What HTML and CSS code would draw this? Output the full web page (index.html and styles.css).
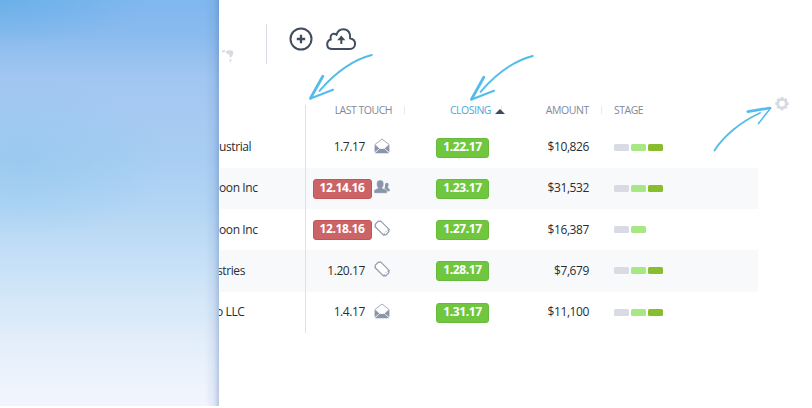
FILE: index.html
```html
<!DOCTYPE html>
<html lang="en">
<head>
<meta charset="utf-8">
<title>Deals</title>
<link rel="stylesheet" href="styles.css">
</head>
<body>
<svg class="defs" aria-hidden="true">
  <symbol id="mail" viewBox="0 0 16 16">
    <path d="M1 6.500 8 1l7 5.500-4.500 5h-5z" fill="#fff" stroke="#a2aabb" stroke-width="1"/>
    <path d="M.6 6.800 5.300 10.600.6 14.300zM15.400 6.800v7.500L10.700 10.600zM.8 15.300 6 10.600q2 1.500 4 0l5.200 4.700z" fill="#8a94ab"/>
  </symbol>
  <symbol id="people" viewBox="0 0 16 16">
    <path d="M10.500 13.200V8.800c1-.7.500-1.700.5-2.700 0-1.500.8-2.400 1.800-2.400 1.400 0 1.900 1.200 1.700 2.600-.1 1.100-.7 1.600-.7 2.400l1.900 1.500v1.800z" fill="#8a94ab"/>
    <path d="M0 14.300v-2.600c.3-1.500 2.600-1.700 3.800-2.400v-.8C2.600 7.200 2.500 5.700 2.700 3.900 3 1.900 4.200 1 6.200 1s3.200 1 3.500 2.900c.2 1.800-.1 3.300-1.300 4.600v.8c1.400.7 4.400.9 4.700 2.400v2.600z" fill="#8a94ab" stroke="#f8f9fb" stroke-width=".5"/>
  </symbol>
  <symbol id="ticket" viewBox="0 0 16 16">
    <path d="M6.600.9 15.300 9.600l-.8.900.5 1.200-3.300 3.300-1.200-.4-.9.600L.9 6.500l.7-.9L1.100 4.400 4.500 1l1.200.5z" fill="#fff" stroke="#929bb1" stroke-width="1.200" stroke-linejoin="round"/>
    <path d="m9.600 14 4.400-4.400" stroke="#929bb1" stroke-width=".9" stroke-dasharray="1.500 1"/>
  </symbol>
</svg>
<div class="page">
  <div class="sky"></div>
  <main class="panel">
    <div class="toolbar">
      <svg class="fragment" width="14" height="15" viewBox="0 0 14 15"><path d="M1 2.500 4 2" fill="none" stroke="#d8dbe1" stroke-width="1.800"/><path d="M4.500 2.500c3-1.500 6-1.500 7.700-.2.300 3-.5 5.500-3.400 6.400L8.300 5.500 5.800 4.600zM8 10.500h3l-1.800 3.200z" fill="#d8dbe1"/></svg>
      <span class="rule"></span>
      <svg class="add" width="24" height="24" viewBox="0 0 24 24" fill="none" stroke="#414d5c"><circle cx="12" cy="12" r="10.500" stroke-width="2"/><path d="M12 7.800v8.400M7.800 12h8.400" stroke-width="2.300"/></svg>
      <svg class="upload" width="31" height="23" viewBox="0 0 31 23" fill="none" stroke="#414d5c" stroke-width="2"><path d="M6.500 21C3 21 1.200 19 1.200 16.500c0-2.800 1.300-4.300 3.500-5C4 8.500 5 6 7.700 5.800c1.300-.1 2 .3 2.800.9C11.500 3.300 14 1.300 17.300 1.300c5 0 7.500 4 6.800 9 3.500.8 5 3 5 5.500 0 3-2.300 5.200-5.300 5.200z"/><path d="M15.300 16V10"/><path d="m11.200 12.200 4.100-4.700 4.100 4.700z" fill="#414d5c" stroke="none"/></svg>
    </div>
    <div class="table">
      <div class="row head">
        <span class="company"></span>
        <span class="touch"><span class="label last">LAST TOUCH</span></span>
        <span class="closing"><span class="label">CLOSING</span><i class="sort"></i></span>
        <span class="amount"><span class="label">AMOUNT</span></span>
        <span class="stage"><span class="label">STAGE</span></span>
      </div>
      <div class="row">
        <span class="company">ustrial</span>
        <span class="touch"><span class="date">1.7.17</span><svg><use href="#mail"/></svg></span>
        <span class="closing"><b class="badge">1.22.17</b></span>
        <span class="amount">$10,826</span>
        <span class="stage"><i></i><i></i><i></i></span>
      </div>
      <div class="row alt">
        <span class="company">oon Inc</span>
        <span class="touch"><b class="badge late">12.14.16</b><svg><use href="#people"/></svg></span>
        <span class="closing"><b class="badge">1.23.17</b></span>
        <span class="amount">$31,532</span>
        <span class="stage"><i></i><i></i><i></i></span>
      </div>
      <div class="row">
        <span class="company">oon Inc</span>
        <span class="touch"><b class="badge late">12.18.16</b><svg><use href="#ticket"/></svg></span>
        <span class="closing"><b class="badge">1.27.17</b></span>
        <span class="amount">$16,387</span>
        <span class="stage"><i></i><i></i></span>
      </div>
      <div class="row alt">
        <span class="company cut-s">stries</span>
        <span class="touch"><span class="date">1.20.17</span><svg><use href="#ticket"/></svg></span>
        <span class="closing"><b class="badge">1.28.17</b></span>
        <span class="amount">$7,679</span>
        <span class="stage"><i></i><i></i><i></i></span>
      </div>
      <div class="row">
        <span class="company cut-o">o LLC</span>
        <span class="touch"><span class="date">1.4.17</span><svg><use href="#mail"/></svg></span>
        <span class="closing"><b class="badge">1.31.17</b></span>
        <span class="amount">$11,100</span>
        <span class="stage"><i></i><i></i><i></i></span>
      </div>
    </div>
  </main>
  <svg class="notes" width="812" height="408" viewBox="0 0 812 408" fill="none">
    <g stroke="#54bcea" stroke-linecap="round" stroke-linejoin="round">
      <g id="arrow"><path d="M371.800 55C352 60 335 73 319.500 90.800" stroke-width="1.900"/><path d="M322.800 76.200 310.500 98.200" stroke-width="2.800"/><path d="M310.500 98.500 333 89.800" stroke-width="2.100"/></g>
      <use href="#arrow" x="161" y="1"/>
      <path d="M714.500 150.500C723 137 740 122 760 113" stroke-width="1.900"/>
      <path d="M747.800 111.600 770 108" stroke-width="2.700"/><path d="m770.300 108.500-11.800 15" stroke-width="1.600"/>
    </g>
    <g transform="translate(782 103.600)" stroke="#d7dae1"><circle r="4.300" stroke-width="2.700"/><path stroke-width="2.700" d="M0-6.700v2M0 4.700v2M-6.700 0h2M4.700 0h2M-4.700-4.700l1.400 1.400M4.700 4.700 3.300 3.300M4.700-4.700 3.300-3.300M-4.700 4.700l1.400-1.400"/></g>
  </svg>
</div>
</body>
</html>
```
FILE: styles.css
```css
* { box-sizing: border-box; }
body { margin: 0; font: 500 12px/16px "Open Sans", "Noto Sans", sans-serif; color: #262d35; background: #fff; }
.defs { position: absolute; width: 0; height: 0; }
.page { position: relative; display: flex; width: 812px; height: 408px; overflow: hidden; }
.sky {
  position: relative; z-index: 1; flex: 0 0 219px; height: 406px;
  background:
    linear-gradient(to left, rgba(72, 104, 170, .32), rgba(72, 104, 170, .1) 5px, transparent 14px),
    radial-gradient(ellipse 150px 45px at 0 0, rgba(80, 168, 225, .45), rgba(80, 168, 225, 0)),
    radial-gradient(ellipse 150px 80px at 20px 160px, rgba(130, 195, 235, .4), rgba(130, 195, 235, 0)),
    linear-gradient(#80b7ee 0, #8abbee 35px, #a0c6f1 75px, #a6c9f2 110px, #a9cef3 160px, #b2d5f4 205px, #c2def6 250px, #d3e6f8 295px, #e2eefa 340px, #edf3fd 380px, #f1f5fe);
}
.panel { flex: 1; min-width: 0; }
.toolbar { display: flex; height: 105px; padding-top: 24px; }
.fragment { margin: 25px 33px 0 2px; flex: none; width: 14px; }
.rule { width: 1px; height: 40px; background: #d9dbe5; margin-left: -2px; }
.add { margin: 3px 0 0 22px; }
.upload { margin: 4px 0 0 13px; }
.table { width: 539px; }
.row { display: grid; grid-template-columns: 87px 130px 99px 79px 144px; height: 41.250px; }
.row > span { display: flex; align-items: center; min-width: 0; }
.alt { background: linear-gradient(#f8f9fb, #f8f9fb) 1px 0 / 538px 100% no-repeat; }
.head { height: 21.500px; color: #7f8998; font-size: 10.500px; letter-spacing: -.5px; }
.head .label { position: relative; top: -5.500px; white-space: nowrap; }
.row > .company { border-right: 1px solid #dfe1e5; white-space: nowrap; letter-spacing: -.4px; }
.cut-s { text-indent: -2px; }
.cut-o { text-indent: -3px; }
.touch .date { width: 59px; text-align: right; letter-spacing: -.4px; }
.touch svg { width: 16px; height: 16px; margin-left: 9px; margin-top: -3px; }
.badge { display: block; width: 53px; height: 20px; margin-top: 1px; border: 1px solid #67bb3b; border-radius: 3px; background: #70c73f; color: #fff; font-weight: 700; line-height: 16px; text-align: center; letter-spacing: -.4px; }
.row > .touch .late { width: 59px; margin-left: 6.500px; background: #cc6467; border-color: #c35457; }
.row > .touch .late + svg { margin-left: 2.500px; }
.row > .amount { justify-content: flex-end; padding-right: 25px; letter-spacing: -.4px; }
.row > .stage { gap: 2px; }
.stage i { width: 15px; height: 7px; border-radius: 1.500px; background: #d8dbe3; }
.stage i:nth-child(2) { background: #a8e884; }
.stage i:nth-child(3) { background: #88bd2d; }
.head .last { width: 86px; text-align: right; }
.head .touch, .head .closing, .head .amount { background: linear-gradient(#e5eaee, #e5eaee) 98px 1px / 1px 8px no-repeat; }
.head .closing { background-position: 65px 1px; color: #4ba8df; padding-left: 14px; }
.head .amount { background-position: 66px 1px; }
.sort { border: 5px solid transparent; border-top: 0; border-bottom: 5px solid #3c4c5c; margin-left: 4px; position: relative; top: -4.500px; }
.notes { position: absolute; inset: 0; pointer-events: none; }
```
